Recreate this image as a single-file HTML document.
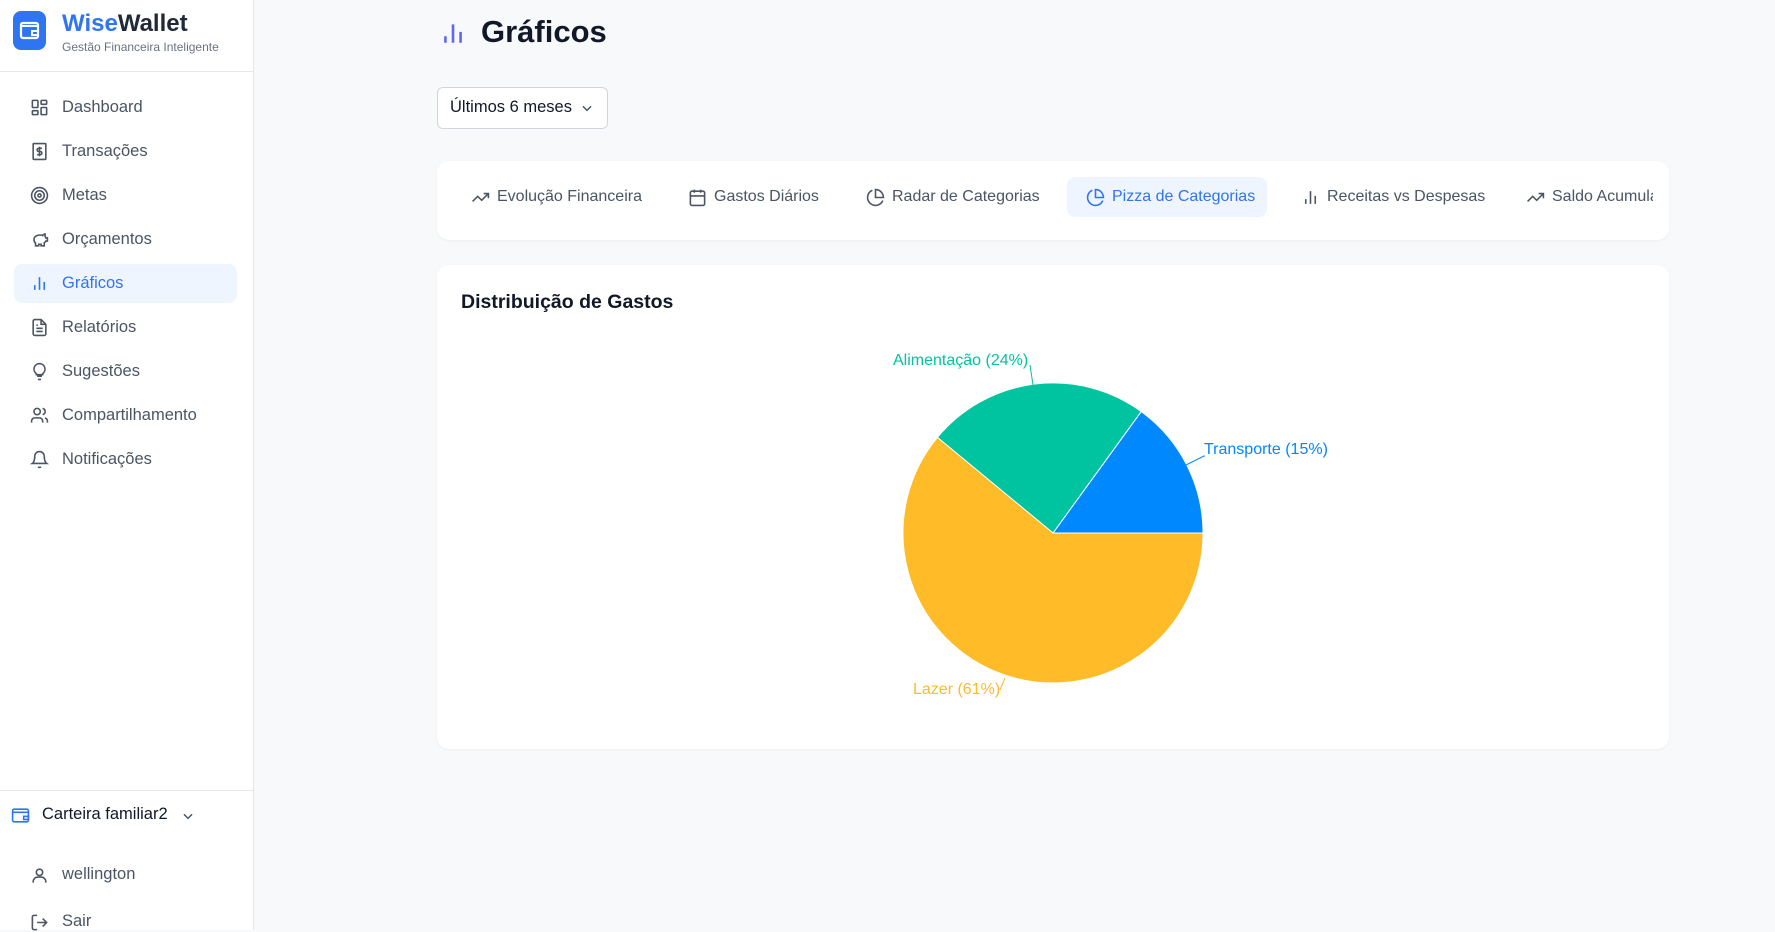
<!DOCTYPE html>
<html><head><meta charset="utf-8"><style>
*{box-sizing:border-box;margin:0;padding:0}
body{width:1775px;height:930px;overflow:hidden;background:#f8f9fb;font-family:"Liberation Sans",sans-serif;position:relative;color:#111827}
.sb{position:absolute;left:0;top:0;width:254px;height:930px;background:#fff;border-right:1px solid #e5e7eb}
.logo{position:absolute;left:13px;top:11px;width:33px;height:39px;border-radius:8px;background:#2f74f0}
.brand{position:absolute;left:62px;top:10px;font-size:24px;font-weight:bold;color:#1f2937}
.brand b{color:#2f74f0}
.sub{position:absolute;left:62px;top:40px;font-size:12px;color:#6b7280}
.hr{position:absolute;left:0;width:253px;height:1px;background:#e5e7eb}
.nav{position:absolute;left:14px;width:223px;height:39px;border-radius:8px;font-size:16.5px;color:#4b5563;line-height:39px;padding-left:48px}
.nav svg{position:absolute;left:16px;top:10px}
.nav.a{background:#eff5ff;color:#2f74f0}
.t{position:absolute;white-space:nowrap}
.card{position:absolute;background:#fff;border-radius:12px;box-shadow:0 1px 2px rgba(0,0,0,.05)}
.tab{position:absolute;top:186px;font-size:16px;color:#4b5563;white-space:nowrap}
.tab svg{position:absolute;left:-26px;top:0px}
</style></head><body>
<div class="sb">
 <div class="logo"><svg width="33" height="39" viewBox="0 0 33 39"><rect x="8" y="12" width="17" height="15" rx="2" fill="none" stroke="#fff" stroke-width="2.2"/><path d="M8 15h17M19 20h6v4h-6z" stroke="#fff" stroke-width="2" fill="none"/></svg></div>
 <div class="brand"><b>Wise</b>Wallet</div>
 <div class="sub">Gestão Financeira Inteligente</div>
 <div class="hr" style="top:71px"></div>
 <div class="nav" style="top:88px"><svg width="19" height="19" viewBox="0 0 24 24" fill="none" stroke="#4b5563" stroke-width="2"><rect x="3" y="3" width="7" height="9" rx="1"/><rect x="14" y="3" width="7" height="5" rx="1"/><rect x="14" y="12" width="7" height="9" rx="1"/><rect x="3" y="16" width="7" height="5" rx="1"/></svg>Dashboard</div>
 <div class="nav" style="top:132px"><svg width="19" height="19" viewBox="0 0 24 24" fill="none" stroke="#4b5563" stroke-width="2"><rect x="4" y="2" width="16" height="20" rx="1"/><path d="M15 8h-4a2 2 0 0 0 0 4h2a2 2 0 0 1 0 4H9M12 6v12"/></svg>Transações</div>
 <div class="nav" style="top:176px"><svg width="19" height="19" viewBox="0 0 24 24" fill="none" stroke="#4b5563" stroke-width="2"><circle cx="12" cy="12" r="10"/><circle cx="12" cy="12" r="6"/><circle cx="12" cy="12" r="2"/></svg>Metas</div>
 <div class="nav" style="top:220px"><svg width="19" height="19" viewBox="0 0 24 24" fill="none" stroke="#4b5563" stroke-width="2"><path d="M19 5c-1.5 0-2.8 1.4-3 2-3.5-1.5-11-.3-11 5 0 1.8 0 3 2 4.5V20h4v-2h3v2h4v-4c1-.5 1.7-1 2-2h2v-4h-2c0-1-.5-1.5-1-2V5z"/></svg>Orçamentos</div>
 <div class="nav a" style="top:264px"><svg width="19" height="19" viewBox="0 0 24 24" fill="none" stroke="#2f74f0" stroke-width="2"><path d="M6 20v-6M12 20V4M18 20v-10"/></svg>Gráficos</div>
 <div class="nav" style="top:308px"><svg width="19" height="19" viewBox="0 0 24 24" fill="none" stroke="#4b5563" stroke-width="2"><path d="M14 2H6a2 2 0 0 0-2 2v16a2 2 0 0 0 2 2h12a2 2 0 0 0 2-2V8z"/><path d="M14 2v6h6M16 13H8M16 17H8M10 9H8"/></svg>Relatórios</div>
 <div class="nav" style="top:352px"><svg width="19" height="19" viewBox="0 0 24 24" fill="none" stroke="#4b5563" stroke-width="2"><path d="M9 18h6M10 22h4M12 2a7 7 0 0 0-4 12.7V16h8v-1.3A7 7 0 0 0 12 2z"/></svg>Sugestões</div>
 <div class="nav" style="top:396px"><svg width="19" height="19" viewBox="0 0 24 24" fill="none" stroke="#4b5563" stroke-width="2"><circle cx="9" cy="7" r="4"/><path d="M2 21v-2a4 4 0 0 1 4-4h6a4 4 0 0 1 4 4v2M16 3.1a4 4 0 0 1 0 7.8M22 21v-2a4 4 0 0 0-3-3.9"/></svg>Compartilhamento</div>
 <div class="nav" style="top:440px"><svg width="19" height="19" viewBox="0 0 24 24" fill="none" stroke="#4b5563" stroke-width="2"><path d="M6 8a6 6 0 0 1 12 0c0 7 3 9 3 9H3s3-2 3-9M10.3 21a1.9 1.9 0 0 0 3.4 0"/></svg>Notificações</div>
 <div class="hr" style="top:790px"></div>
 <svg style="position:absolute;left:11px;top:806px" width="19" height="19" viewBox="0 0 24 24" fill="none" stroke="#2f74f0" stroke-width="2"><rect x="2" y="4" width="20" height="16" rx="2"/><path d="M2 8h20M16 13h6v4h-6z"/></svg>
 <div class="t" style="left:42px;top:805px;font-size:16.5px;color:#111827">Carteira familiar2</div>
 <svg style="position:absolute;left:181px;top:809px" width="14" height="14" viewBox="0 0 24 24" fill="none" stroke="#4b5563" stroke-width="2.5"><path d="M5 9l7 7 7-7"/></svg>
 <svg style="position:absolute;left:30px;top:866px" width="19" height="19" viewBox="0 0 24 24" fill="none" stroke="#4b5563" stroke-width="2"><circle cx="12" cy="8" r="4"/><path d="M4 21v-1a6 6 0 0 1 6-6h4a6 6 0 0 1 6 6v1"/></svg>
 <div class="t" style="left:62px;top:865px;font-size:16.5px;color:#4b5563">wellington</div>
 <svg style="position:absolute;left:30px;top:913px" width="19" height="19" viewBox="0 0 24 24" fill="none" stroke="#4b5563" stroke-width="2"><path d="M9 21H5a2 2 0 0 1-2-2V5a2 2 0 0 1 2-2h4M16 17l5-5-5-5M21 12H9"/></svg>
 <div class="t" style="left:62px;top:912px;font-size:16.5px;color:#4b5563">Sair</div>
</div>

<svg style="position:absolute;left:440px;top:20px" width="26" height="26" viewBox="0 0 24 24" fill="none" stroke="#6366f1" stroke-width="2.4"><path d="M5 21v-6M12 21V4M19 21v-10"/></svg>
<div class="t" style="left:481px;top:14px;font-size:31px;font-weight:bold;color:#111827">Gráficos</div>

<div style="position:absolute;left:437px;top:87px;width:171px;height:42px;background:#fff;border:1px solid #d1d5db;border-radius:6px"></div>
<div class="t" style="left:450px;top:98px;font-size:16.5px;color:#111827">Últimos 6 meses</div>
<svg style="position:absolute;left:580px;top:101px" width="14" height="14" viewBox="0 0 24 24" fill="none" stroke="#4b5563" stroke-width="2.5"><path d="M5 9l7 7 7-7"/></svg>

<div class="card" style="left:437px;top:161px;width:1232px;height:79px;overflow:hidden">
 <div style="position:absolute;left:630px;top:16px;width:200px;height:40px;background:#eff5ff;border-radius:8px"></div>
</div>
<div style="position:absolute;left:437px;top:161px;width:1216px;height:79px;overflow:hidden">
 <div class="tab" style="left:60px;top:27px"><svg width="19" height="19" viewBox="0 0 24 24" fill="none" stroke="#4b5563" stroke-width="2"><path d="M22 7l-8.5 8.5-5-5L2 17M16 7h6v6"/></svg>Evolução Financeira</div>
 <div class="tab" style="left:277px;top:27px"><svg width="19" height="19" viewBox="0 0 24 24" fill="none" stroke="#4b5563" stroke-width="2"><rect x="3" y="4" width="18" height="18" rx="2"/><path d="M16 2v4M8 2v4M3 10h18"/></svg>Gastos Diários</div>
 <div class="tab" style="left:455px;top:27px"><svg width="19" height="19" viewBox="0 0 24 24" fill="none" stroke="#4b5563" stroke-width="2"><path d="M21.2 15.9A10 10 0 1 1 8 2.8"/><path d="M22 12A10 10 0 0 0 12 2v10z"/></svg>Radar de Categorias</div>
 <div class="tab" style="left:675px;top:27px;color:#2f74f0"><svg width="19" height="19" viewBox="0 0 24 24" fill="none" stroke="#2f74f0" stroke-width="2"><path d="M21.2 15.9A10 10 0 1 1 8 2.8"/><path d="M22 12A10 10 0 0 0 12 2v10z"/></svg>Pizza de Categorias</div>
 <div class="tab" style="left:890px;top:27px"><svg width="19" height="19" viewBox="0 0 24 24" fill="none" stroke="#4b5563" stroke-width="2"><path d="M6 20v-6M12 20V4M18 20v-10"/></svg>Receitas vs Despesas</div>
 <div class="tab" style="left:1115px;top:27px"><svg width="19" height="19" viewBox="0 0 24 24" fill="none" stroke="#4b5563" stroke-width="2"><path d="M22 7l-8.5 8.5-5-5L2 17M16 7h6v6"/></svg>Saldo Acumulado</div>
</div>

<div class="card" style="left:437px;top:265px;width:1232px;height:484px"></div>
<div class="t" style="left:461px;top:291px;font-size:19.5px;font-weight:bold;color:#111827">Distribuição de Gastos</div>

<svg style="position:absolute;left:0;top:0" width="1775" height="930">
 <path d="M1053,533 L1203,533 A150,150 0 0 0 1141.2,411.6 Z" fill="#0088FE" stroke="#fff"/>
 <path d="M1053,533 L1141.2,411.6 A150,150 0 0 0 937.4,437.4 Z" fill="#00C49F" stroke="#fff"/>
 <path d="M1053,533 L937.4,437.4 A150,150 0 1 0 1203,533 Z" fill="#FFBB28" stroke="#fff"/>
 <path d="M1186,465 L1204,456 L1205,456" stroke="#0088FE" fill="none"/>
 <path d="M1033,385 L1030,365" stroke="#00C49F" fill="none"/>
 <path d="M1005,678 L1000,690" stroke="#FFBB28" fill="none"/>
 <text x="1204" y="454" font-family="Liberation Sans" font-size="16" fill="#0088FE">Transporte (15%)</text>
 <text x="893" y="365" font-family="Liberation Sans" font-size="16" fill="#00C49F">Alimentação (24%)</text>
 <text x="913" y="694" font-family="Liberation Sans" font-size="16" fill="#FFBB28">Lazer (61%)</text>
</svg>
</body></html>
